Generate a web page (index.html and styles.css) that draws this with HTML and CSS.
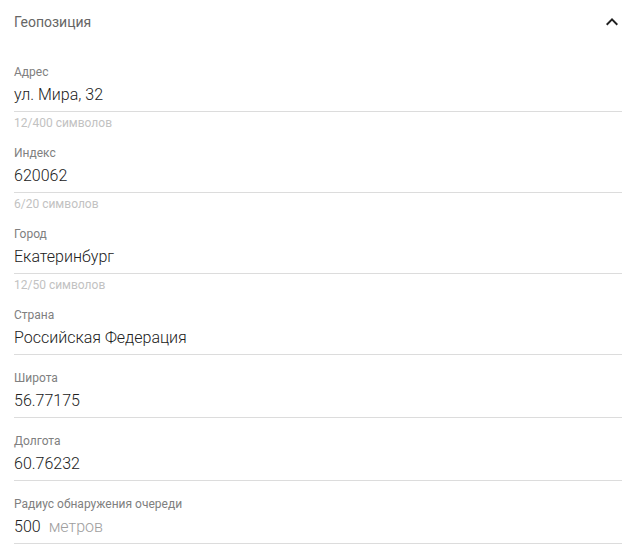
FILE: index.html
```html
<!DOCTYPE html>
<html lang="ru">
<head>
<meta charset="utf-8">
<title>Геопозиция</title>
<link rel="stylesheet" href="styles.css">
</head>
<body>
<section class="panel">
  <div class="panel-header">
    <span class="panel-title">Геопозиция</span>
    <svg class="chevron" width="24" height="24" viewBox="0 0 24 24"><path d="M12 8l-6 6 1.41 1.41L12 10.83l4.59 4.58L18 14z" fill="#212121"/></svg>
  </div>
  <div class="fields">
    <div class="field">
      <div class="label">Адрес</div>
      <div class="input"><span class="value">ул. Мира, 32</span></div>
      <div class="counter">12/400 символов</div>
    </div>
    <div class="field">
      <div class="label">Индекс</div>
      <div class="input"><span class="value">620062</span></div>
      <div class="counter">6/20 символов</div>
    </div>
    <div class="field">
      <div class="label">Город</div>
      <div class="input"><span class="value">Екатеринбург</span></div>
      <div class="counter">12/50 символов</div>
    </div>
    <div class="field">
      <div class="label">Страна</div>
      <div class="input"><span class="value">Российская Федерация</span></div>
    </div>
    <div class="field">
      <div class="label">Широта</div>
      <div class="input"><span class="value">56.77175</span></div>
    </div>
    <div class="field">
      <div class="label">Долгота</div>
      <div class="input"><span class="value">60.76232</span></div>
    </div>
    <div class="field">
      <div class="label">Радиус обнаружения очереди</div>
      <div class="input"><span class="value">500</span><span class="suffix">метров</span></div>
    </div>
  </div>
</section>
</body>
</html>
```
FILE: styles.css
```css
html, body {
  margin: 0;
  padding: 0;
  background: #ffffff;
}
body {
  font-family: Roboto, "Liberation Sans", sans-serif;
  color: #212121;
}
.panel {
  padding: 0 14px;
}
.panel-header {
  height: 44px;
  display: flex;
  align-items: center;
  justify-content: space-between;
}
.panel-title {
  font-size: 14px;
  color: #666666;
}
.chevron {
  display: block;
  margin-right: -2px;
}
.fields {
  padding-top: 5px;
}
.field {
  padding-top: 16px;
}
.label {
  font-size: 12px;
  line-height: 14px;
  color: #808080;
}
.input {
  margin-top: 6px;
  padding-bottom: 6px;
  border-bottom: 1px solid #dcdcdc;
  font-size: 16px;
  line-height: 20px;
  font-weight: 300;
  display: flex;
  gap: 8px;
}
.value {
  color: #212121;
}
.suffix {
  color: #9e9e9e;
}
.counter {
  margin-top: 4px;
  font-size: 12px;
  line-height: 14px;
  color: #c2c2c2;
}
```
